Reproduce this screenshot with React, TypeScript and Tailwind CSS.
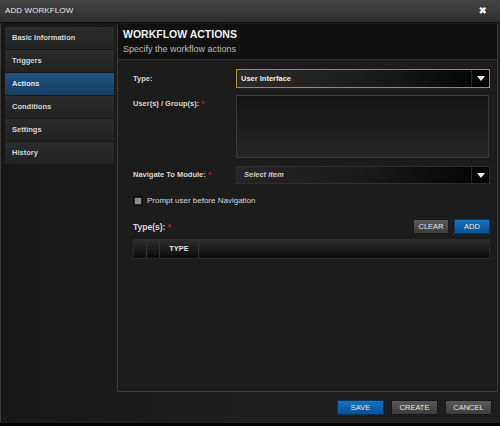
import React from "react";

const navItems = ["Basic Information", "Triggers", "Actions", "Conditions", "Settings", "History"];

function Caret() {
  return (
    <div className="w-[18px] self-stretch flex items-center justify-center bg-[#050505] border-l border-[#2a2a2a]">
      <svg width="8" height="5" viewBox="0 0 8 5">
        <path d="M0 0 L8 0 L4 5 Z" fill="#eee" />
      </svg>
    </div>
  );
}

function Btn({ label, blue, w = "w-[47px]" }: { label: string; blue?: boolean; w?: string }) {
  return (
    <button
      className={`${w} h-[15px] flex items-center justify-center text-[7.5px] text-[#e8e8e8] border ${
        blue
          ? "bg-gradient-to-b from-[#1572c4] to-[#0b4f91] border-[#08335c]"
          : "bg-gradient-to-b from-[#5a5a5a] to-[#3c3c3c] border-[#181818]"
      }`}
    >
      {label}
    </button>
  );
}

export default function App() {
  return (
    <div className="w-[500px] h-[426px] bg-black font-['Liberation_Sans',Arial,sans-serif] overflow-hidden">
      <div className="h-[423px] flex flex-col bg-[#1e1e1e]">
        {/* Title bar */}
        <div className="h-[23px] flex items-center justify-between pl-[5px] pr-[13px] bg-gradient-to-b from-[#444] to-[#2f2f2f] border-b border-[#0e0e0e]">
          <span className="text-[8px] text-[#e6e6e6] tracking-[0.1px]">ADD WORKFLOW</span>
          <span className="text-[10px] leading-none text-white font-['DejaVu_Sans',sans-serif]">✖</span>
        </div>

        {/* Body */}
        <div className="flex-1 flex border-l border-[#3a3a3a] bg-gradient-to-r from-[#171717] via-[#1e1e1e] to-[#1e1e1e]">
          {/* Nav */}
          <div className="w-[109px] ml-[4px] pt-[4px] flex flex-col">
            {navItems.map((n) => (
              <div
                key={n}
                className={`h-[23px] flex items-center pl-[7px] text-[7.5px] font-bold border-b border-[#1a1a1a] ${
                  n === "Actions"
                    ? "bg-gradient-to-b from-[#215383] to-[#163d62] text-[#dfe6ee]"
                    : "bg-gradient-to-b from-[#2b2b2b] to-[#222] text-[#d6d6d6]"
                }`}
              >
                {n}
              </div>
            ))}
          </div>

          {/* Right column */}
          <div className="ml-[3px] w-[381px] pt-[1px] flex flex-col">
            <div className="h-[368px] flex flex-col border-l border-b border-r border-[#3a3a3a] bg-[#1c1c1c]">
              {/* Header */}
              <div className="h-[36px] bg-[#111] border-b border-[#343434] pl-[5px] pt-[4px]">
                <div className="text-[10.5px] font-bold text-[#f0f0f0] leading-[13px]">WORKFLOW ACTIONS</div>
                <div className="text-[9px] text-[#bdbdbd] leading-[12px] mt-[2px]">Specify the workflow actions</div>
              </div>

              <div className="pl-[15px] pr-[6px]">
                {/* Type */}
                <div className="flex items-center mt-[9px]">
                  <div className="w-[103px] text-[7.5px] font-bold text-[#d8d8d8]">Type:</div>
                  <div className="w-[254px] h-[19px] flex items-center border border-[#a39322] bg-gradient-to-r from-[#2a2a2a] via-[#1d1d1d] to-[#050505]">
                    <span className="flex-1 pl-[4px] text-[7.5px] font-bold text-[#eee]">User Interface</span>
                    <Caret />
                  </div>
                </div>

                {/* Users */}
                <div className="flex mt-[7px]">
                  <div className="w-[103px] pt-[3px] text-[7.5px] font-bold text-[#d8d8d8]">
                    User(s) / Group(s): <span className="text-[#d01818]">*</span>
                  </div>
                  <div className="w-[253px] h-[63px] border border-[#3a3a3a] bg-gradient-to-b from-[#141414] to-[#252525]" />
                </div>

                {/* Navigate */}
                <div className="flex items-center mt-[8px]">
                  <div className="w-[103px] text-[7.5px] font-bold text-[#d8d8d8]">
                    Navigate To Module: <span className="text-[#d01818]">*</span>
                  </div>
                  <div className="w-[254px] h-[18px] flex items-center border border-[#2e2e2e] bg-gradient-to-r from-[#252525] via-[#1a1a1a] to-[#050505]">
                    <span className="flex-1 pl-[7px] text-[7.5px] font-bold italic text-[#cfcfcf]">Select item</span>
                    <Caret />
                  </div>
                </div>

                {/* Checkbox */}
                <div className="flex items-center mt-[11px]">
                  <div className="w-[10px] h-[10px] border border-[#0a0a0a] bg-[#2a2a2a] flex items-center justify-center">
                    <div className="w-[6px] h-[6px] bg-[#8a8a8a]" />
                  </div>
                  <span className="ml-[4px] text-[8px] text-[#d8d8d8]">Prompt user before Navigation</span>
                </div>

                {/* Type(s) */}
                <div className="flex items-center justify-between mt-[12px] w-[357px]">
                  <div className="text-[8.5px] font-bold text-[#d8d8d8] pt-[2px]">
                    Type(s): <span className="text-[#d01818]">*</span>
                  </div>
                  <div className="flex gap-[5px]">
                    <Btn label="CLEAR" w="w-[36px]" />
                    <Btn label="ADD" blue w="w-[36px]" />
                  </div>
                </div>

                {/* Table header */}
                <div className="mt-[5px] w-[357px] h-[20px] flex border border-[#2a2a2a] bg-gradient-to-b from-[#2c2c2c] to-[#0c0c0c]">
                  <div className="w-[13px] border-r border-[#333]" />
                  <div className="w-[13px] border-r border-[#333]" />
                  <div className="w-[39px] border-r border-[#333] flex items-center justify-center text-[7.5px] font-bold text-[#e0e0e0]">
                    TYPE
                  </div>
                  <div className="flex-1" />
                </div>
              </div>
            </div>

            {/* Footer */}
            <div className="flex justify-end gap-[7px] pr-[6px] mt-[8px]">
              <Btn label="SAVE" blue />
              <Btn label="CREATE" />
              <Btn label="CANCEL" />
            </div>
          </div>
        </div>
      </div>
    </div>
  );
}
